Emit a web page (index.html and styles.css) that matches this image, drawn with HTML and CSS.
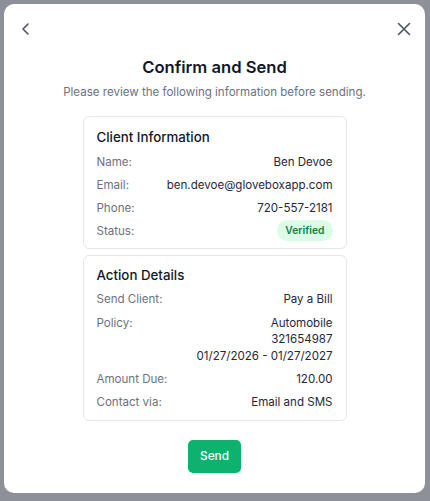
FILE: index.html
```html
<!DOCTYPE html>
<html lang="en">
<head>
<meta charset="utf-8">
<title>Confirm and Send</title>
<link rel="stylesheet" href="styles.css">
</head>
<body>
<div class="overlay">
  <div class="modal">
    <div class="topbar">
      <button class="icon-btn" aria-label="Back">
        <svg width="16" height="16" viewBox="0 0 16 16" fill="none" stroke="currentColor" stroke-width="1.6" stroke-linecap="round" stroke-linejoin="round"><path d="M10 3 L5 8 L10 13"/></svg>
      </button>
      <button class="icon-btn" aria-label="Close">
        <svg width="16" height="16" viewBox="0 0 16 16" fill="none" stroke="currentColor" stroke-width="1.6" stroke-linecap="round"><path d="M2.5 2.5 L13.5 13.5 M13.5 2.5 L2.5 13.5"/></svg>
      </button>
    </div>
    <h1 class="title">Confirm and Send</h1>
    <p class="subtitle">Please review the following information before sending.</p>

    <section class="card">
      <h2 class="card-title">Client Information</h2>
      <div class="row"><span class="label">Name:</span><span class="value">Ben Devoe</span></div>
      <div class="row"><span class="label">Email:</span><span class="value">ben.devoe@gloveboxapp.com</span></div>
      <div class="row"><span class="label">Phone:</span><span class="value">720-557-2181</span></div>
      <div class="row"><span class="label">Status:</span><span class="badge">Verified</span></div>
    </section>

    <section class="card">
      <h2 class="card-title">Action Details</h2>
      <div class="row"><span class="label">Send Client:</span><span class="value">Pay a Bill</span></div>
      <div class="row"><span class="label">Policy:</span><span class="value multi">Automobile<br>321654987<br>01/27/2026 - 01/27/2027</span></div>
      <div class="row"><span class="label">Amount Due:</span><span class="value">120.00</span></div>
      <div class="row"><span class="label">Contact via:</span><span class="value">Email and SMS</span></div>
    </section>

    <div class="actions">
      <button class="send-btn">Send</button>
    </div>
  </div>
</div>
</body>
</html>
```
FILE: styles.css
```css
* { box-sizing: border-box; }
html, body { margin: 0; padding: 0; }
body {
  font-family: Inter, "Noto Sans", sans-serif;
  background: #8d9099;
  width: 430px;
  height: 501px;
  overflow: hidden;
}
.overlay {
  padding: 4px 5px 8px 4px;
  height: 501px;
}
.modal {
  background: #ffffff;
  border-radius: 10px;
  height: 489px;
  display: flex;
  flex-direction: column;
  align-items: center;
}
.topbar {
  width: 100%;
  display: flex;
  justify-content: space-between;
  padding: 17px 13px 0 14px;
  height: 43px;
}
.icon-btn {
  border: 0;
  background: none;
  padding: 0;
  width: 16px;
  height: 16px;
  color: #4b5563;
  display: flex;
}
.title {
  margin: 8px 0 0;
  font-size: 16.6px;
  font-weight: 600;
  color: #111827;
  line-height: 24px;
}
.subtitle {
  margin: 2px 0 0;
  font-size: 11.55px;
  color: #6b7280;
  line-height: 22px;
}
.card {
  width: 264px;
  border: 1px solid #e5e7eb;
  border-radius: 6px;
  padding: 10px 13px 4px 13px;
  margin-top: 13px;
}
.card + .card { margin-top: 6px; padding-bottom: 6px; }
.card + .card .card-title { margin-top: -1px; }
.card-title {
  margin: 0 0 3px;
  font-size: 13.3px;
  font-weight: 500;
  color: #111827;
  line-height: 20px;
}
.row {
  display: flex;
  justify-content: space-between;
  align-items: flex-start;
  font-size: 11.55px;
  line-height: 18px;
  padding: 2.6px 0;
}
.card + .card .row + .row { padding-top: 2.9px; }
.label { color: #6b7280; }
.value { color: #1f2937; text-align: right; }
.multi { line-height: 16.5px; margin-top: 1px; }
.badge {
  background: #dcfce7;
  color: #15803d;
  font-size: 10.3px;
  font-weight: 600;
  border-radius: 999px;
  padding: 2px 8px;
  line-height: 17px;
  margin-top: -2px;
}
.actions {
  margin-top: 19px;
}
.send-btn {
  background: #0cb26d;
  color: #ffffff;
  border: 0;
  border-radius: 5px;
  font-family: inherit;
  font-size: 11.8px;
  font-weight: 500;
  width: 53px;
  height: 33px;
}
```
